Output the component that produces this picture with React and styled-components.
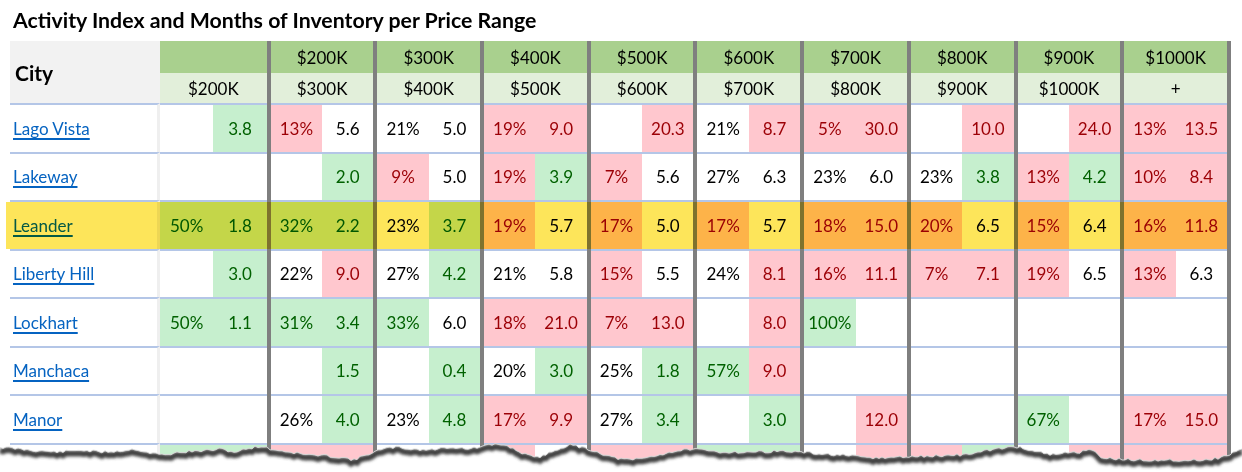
import React from "react";
import styled, { createGlobalStyle, css } from "styled-components";

const GlobalStyle = createGlobalStyle`
  html, body {
    margin: 0;
    padding: 0;
    background: #fff;
    overflow: hidden;
  }
  body {
    font-family: Lato, "Liberation Sans", sans-serif;
    color: #000;
  }
`;

const GROUPS = [
  ["", "$200K"],
  ["$200K", "$300K"],
  ["$300K", "$400K"],
  ["$400K", "$500K"],
  ["$500K", "$600K"],
  ["$600K", "$700K"],
  ["$700K", "$800K"],
  ["$800K", "$900K"],
  ["$900K", "$1000K"],
  ["$1000K", "+"],
];

// first char = tone (g green, r red, n neutral), rest = value
const ROWS = [
  {
    city: "Lago Vista",
    cells: ["", "g3.8", "r13%", "n5.6", "n21%", "n5.0", "r19%", "r9.0", "", "r20.3",
      "n21%", "r8.7", "r5%", "r30.0", "", "r10.0", "", "r24.0", "r13%", "r13.5"],
  },
  {
    city: "Lakeway",
    cells: ["", "", "", "g2.0", "r9%", "n5.0", "r19%", "g3.9", "r7%", "n5.6",
      "n27%", "n6.3", "n23%", "n6.0", "n23%", "g3.8", "r13%", "g4.2", "r10%", "r8.4"],
  },
  {
    city: "Leander",
    highlight: true,
    cells: ["g50%", "g1.8", "g32%", "g2.2", "n23%", "g3.7", "r19%", "n5.7", "r17%", "n5.0",
      "r17%", "n5.7", "r18%", "r15.0", "r20%", "n6.5", "r15%", "n6.4", "r16%", "r11.8"],
  },
  {
    city: "Liberty Hill",
    cells: ["", "g3.0", "n22%", "r9.0", "n27%", "g4.2", "n21%", "n5.8", "r15%", "n5.5",
      "n24%", "r8.1", "r16%", "r11.1", "r7%", "r7.1", "r19%", "n6.5", "r13%", "n6.3"],
  },
  {
    city: "Lockhart",
    cells: ["g50%", "g1.1", "g31%", "g3.4", "g33%", "n6.0", "r18%", "r21.0", "r7%", "r13.0",
      "", "r8.0", "g100%", "", "", "", "", "", "", ""],
  },
  {
    city: "Manchaca",
    cells: ["", "", "", "g1.5", "", "g0.4", "n20%", "g3.0", "n25%", "g1.8",
      "g57%", "r9.0", "", "", "", "", "", "", "", ""],
  },
  {
    city: "Manor",
    cells: ["", "", "n26%", "g4.0", "n23%", "g4.8", "r17%", "r9.9", "n27%", "g3.4",
      "", "g3.0", "", "r12.0", "", "", "g67%", "", "r17%", "r15.0"],
  },
  {
    city: "Marble Falls",
    cells: ["g100%", "g1.0", "r14%", "r9.3", "n25%", "n5.2", "r18%", "n6.1", "r16%", "r10.5",
      "g40%", "g2.5", "", "r8.0", "r11%", "g3.6", "", "r14.0", "r20%", "r9.8"],
  },
];

const TONES = {
  g: { bg: "#C6EFCE", fg: "#006100" },
  r: { bg: "#FFC7CE", fg: "#9C0006" },
  n: { bg: "#FFFFFF", fg: "#000000" },
};

const Page = styled.div`
  position: relative;
  width: 1242px;
  height: 472px;
  overflow: hidden;
  background: #fff;
`;

const Title = styled.h1`
  display: flex;
  align-items: center;
  height: 39px;
  margin: 0 0 2px;
  padding-left: 13px;
  font-size: 21.3px;
  font-weight: 700;
`;

const Sheet = styled.div`
  box-sizing: border-box;
  width: 1221px;
  margin-left: 10px;
  border-right: 4px solid #7f7f7f;
`;

const Grid = styled.div`
  position: relative;
  display: grid;
  grid-template-columns: 150px repeat(10, 1fr);

  ${(p) =>
    p.$highlight &&
    css`
      &::after {
        content: "";
        position: absolute;
        top: 2px;
        bottom: 0;
        left: -4px;
        right: 0;
        background: #fde55a;
        mix-blend-mode: multiply;
        pointer-events: none;
      }
    `}
`;

const CityHead = styled.div`
  display: flex;
  align-items: center;
  height: 62px;
  padding-left: 5px;
  background: #f2f2f2;
  font-size: 21px;
  font-weight: 700;
`;

const Group = styled.div`
  display: flex;
  flex-direction: ${(p) => (p.$stack ? "column" : "row")};
  min-width: 0;
  border-left: ${(p) => (p.$first ? "none" : "4px solid #7f7f7f")};
`;

const HeadCell = styled.div`
  display: flex;
  align-items: center;
  justify-content: center;
  height: ${(p) => (p.$top ? "32px" : "30px")};
  background: ${(p) => (p.$top ? "#A9D08E" : "#E2EFDA")};
  font-size: 17px;
`;

const CityCell = styled.div`
  display: flex;
  align-items: center;
  height: 46.53px;
  padding-left: 3px;
  border-top: 2px solid #b4c6e7;
  border-right: 3px solid #efefef;
`;

const CityLink = styled.a`
  color: #0563c1;
  font-size: 17px;
  text-decoration: underline;
  text-decoration-thickness: 1.5px;
  text-underline-offset: 3px;
`;

const Cell = styled.div`
  flex: 1 1 0;
  min-width: 0;
  display: flex;
  align-items: center;
  justify-content: center;
  height: 46.53px;
  border-top: 2px solid #b4c6e7;
  background: ${(p) => TONES[p.$tone].bg};
  color: ${(p) => TONES[p.$tone].fg};
  font-size: 17px;
`;

const Tear = styled.svg`
  position: absolute;
  left: 0;
  top: 430px;
  width: 1242px;
  height: 42px;
  pointer-events: none;
`;

const EDGE = [
  [0, 447], [20, 449], [40, 451], [60, 452], [80, 450], [100, 452], [120, 451],
  [135, 449], [150, 453], [165, 455], [180, 452], [200, 451], [220, 449], [235, 452],
  [250, 448], [262, 446], [270, 449], [290, 452], [310, 455], [330, 456], [345, 458],
  [355, 460], [365, 455], [380, 450], [395, 447], [410, 449], [430, 450], [450, 447],
  [470, 449], [490, 445], [500, 444], [510, 447], [520, 452], [535, 458], [545, 455],
  [560, 448], [570, 445], [585, 448], [600, 453], [615, 458], [630, 460], [650, 457],
  [670, 452], [690, 449], [700, 450], [720, 452], [750, 452], [780, 451], [800, 452],
  [820, 454], [840, 455], [860, 457], [880, 458], [900, 457], [930, 456], [960, 455],
  [980, 452], [1000, 448], [1020, 447], [1035, 451], [1050, 455], [1065, 453],
  [1080, 452], [1090, 448], [1100, 457], [1115, 459], [1140, 460], [1170, 460],
  [1200, 460], [1220, 458], [1235, 452], [1242, 449],
];

const TEAR_TOP = 430;

const edgePoints = () => {
  let seed = 11;
  const rnd = () => {
    seed = (seed * 9301 + 49297) % 233280;
    return seed / 233280;
  };
  const pts = [];
  for (let x = 0; x <= 1242; x += 3) {
    let i = 1;
    while (i < EDGE.length - 1 && EDGE[i][0] < x) i++;
    const [x0, y0] = EDGE[i - 1];
    const [x1, y1] = EDGE[i];
    const t = x1 === x0 ? 0 : (x - x0) / (x1 - x0);
    const y = y0 + (y1 - y0) * t + (rnd() - 0.5) * 2.6;
    pts.push([x, +(y - TEAR_TOP).toFixed(1)]);
  }
  return pts;
};

const TornEdge = () => {
  const pts = edgePoints();
  const line = pts.map(([x, y], i) => `${i ? "L" : "M"}${x},${y}`).join(" ");
  const below = `${line} L1242,42 L0,42 Z`;
  const shadow = pts.map(([x, y], i) => `${i ? "L" : "M"}${x},${y + 3}`).join(" ");
  return (
    <Tear viewBox="0 0 1242 42">
      <defs>
        <clipPath id="below">
          <path d={below} />
        </clipPath>
        <filter id="soft" x="-5%" y="-50%" width="110%" height="200%">
          <feGaussianBlur stdDeviation="1.8" />
        </filter>
      </defs>
      <path d={below} fill="#fff" />
      <g clipPath="url(#below)">
        <path d={shadow} fill="none" stroke="#404040" strokeWidth="6" filter="url(#soft)" />
        <path d="M1233,4 L1236,14 L1242,20" fill="none" stroke="#777" strokeWidth="4" filter="url(#soft)" />
      </g>
      <path d={line} fill="none" stroke="#d8d8d8" strokeWidth="0.8" />
    </Tear>
  );
};

const parse = (s) => (s ? { tone: s[0], text: s.slice(1) } : { tone: "n", text: "" });

const HeaderRow = () => (
  <Grid>
    <CityHead>City</CityHead>
    {GROUPS.map(([top, bottom], i) => (
      <Group key={i} $first={i === 0} $stack>
        <HeadCell $top>{top}</HeadCell>
        <HeadCell>{bottom}</HeadCell>
      </Group>
    ))}
  </Grid>
);

const DataRow = ({ row }) => (
  <Grid $highlight={row.highlight}>
    <CityCell>
      <CityLink href="#">{row.city}</CityLink>
    </CityCell>
    {GROUPS.map((_, g) => {
      const pct = parse(row.cells[g * 2]);
      const mos = parse(row.cells[g * 2 + 1]);
      return (
        <Group key={g} $first={g === 0}>
          <Cell $tone={pct.tone}>{pct.text}</Cell>
          <Cell $tone={mos.tone}>{mos.text}</Cell>
        </Group>
      );
    })}
  </Grid>
);

export default function App() {
  return (
    <Page>
      <GlobalStyle />
      <Title>Activity Index and Months of Inventory per Price Range</Title>
      <Sheet>
        <HeaderRow />
        {ROWS.map((row) => (
          <DataRow key={row.city} row={row} />
        ))}
      </Sheet>
      <TornEdge />
    </Page>
  );
}
